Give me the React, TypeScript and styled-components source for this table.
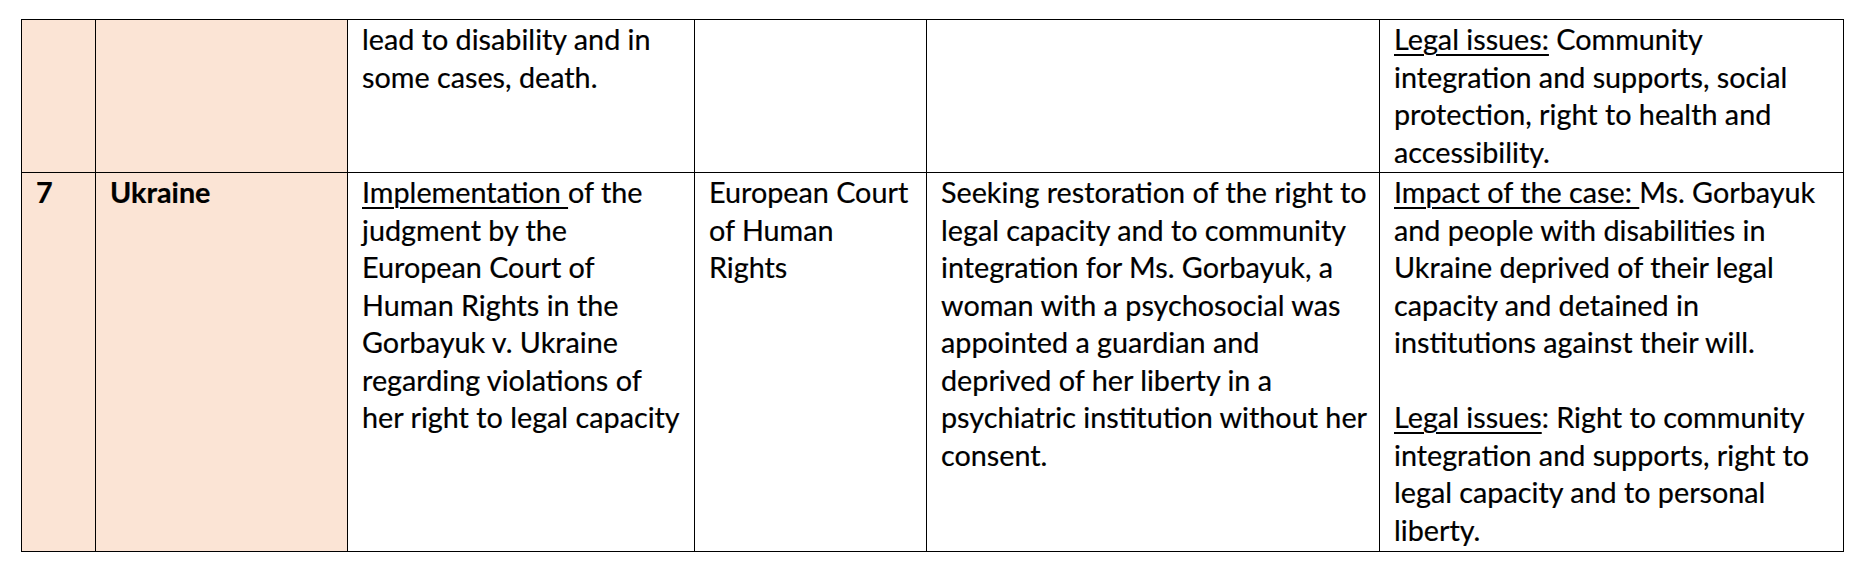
import styled, { createGlobalStyle } from "styled-components";

const GlobalStyle = createGlobalStyle`
  html, body {
    margin: 0;
    padding: 0;
    background: #fff;
  }
  body {
    font-family: Lato, "Liberation Sans", sans-serif;
    color: #000;
  }
`;

const Page = styled.div`
  padding: 19px 0 0 21px;
  width: 1872px;
  height: 586px;
  box-sizing: border-box;
`;

const Table = styled.div`
  display: grid;
  grid-template-columns: 73px 251px 346px 231px 452px 463px;
  grid-template-rows: 152px 378px;
  gap: 1px;
  width: max-content;
  background: #000;
  border: 1px solid #000;
`;

const Cell = styled.div<{ $shaded?: boolean }>`
  background: ${(p) => (p.$shaded ? "#fbe4d5" : "#fff")};
  padding: 1px 6px 0 14px;
  font-size: 28.75px;
  line-height: 37.5px;
  white-space: nowrap;
  overflow: hidden;
  -webkit-text-stroke: 0.2px #000;
`;

const Strong = styled.span`
  font-weight: 700;
`;

const U = styled.span`
  text-decoration: underline;
  text-decoration-thickness: 2px;
  text-underline-offset: 4px;
  white-space: pre;
`;

const Para = styled.div`
  min-height: 37.5px;
`;

type Line = React.ReactNode;

function Lines({ lines }: { lines: Line[] }) {
  return (
    <>
      {lines.map((l, i) => (
        <Para key={i}>{l}</Para>
      ))}
    </>
  );
}

export default function App() {
  return (
    <Page>
      <GlobalStyle />
      <Table>
        <Cell $shaded />
        <Cell $shaded />
        <Cell>
          <Lines lines={["lead to disability and in", "some cases, death."]} />
        </Cell>
        <Cell />
        <Cell />
        <Cell>
          <Lines
            lines={[
              <>
                <U>Legal issues:</U> Community
              </>,
              "integration and supports, social",
              "protection, right to health and",
              "accessibility.",
            ]}
          />
        </Cell>

        <Cell $shaded>
          <Strong>7</Strong>
        </Cell>
        <Cell $shaded>
          <Strong>Ukraine</Strong>
        </Cell>
        <Cell>
          <Lines
            lines={[
              <>
                <U>Implementation </U>of the
              </>,
              "judgment by the",
              "European Court of",
              "Human Rights in the",
              "Gorbayuk v. Ukraine",
              "regarding violations of",
              "her right to legal capacity",
            ]}
          />
        </Cell>
        <Cell>
          <Lines lines={["European Court", "of Human", "Rights"]} />
        </Cell>
        <Cell>
          <Lines
            lines={[
              "Seeking restoration of the right to",
              "legal capacity and to community",
              "integration for Ms. Gorbayuk, a",
              "woman with a psychosocial was",
              "appointed a guardian and",
              "deprived of her liberty in a",
              "psychiatric institution without her",
              "consent.",
            ]}
          />
        </Cell>
        <Cell>
          <Lines
            lines={[
              <>
                <U>Impact of the case: </U>Ms. Gorbayuk
              </>,
              "and people with disabilities in",
              "Ukraine deprived of their legal",
              "capacity and detained in",
              "institutions against their will.",
              "",
              <>
                <U>Legal issues</U>: Right to community
              </>,
              "integration and supports, right to",
              "legal capacity and to personal",
              "liberty.",
            ]}
          />
        </Cell>
      </Table>
    </Page>
  );
}
